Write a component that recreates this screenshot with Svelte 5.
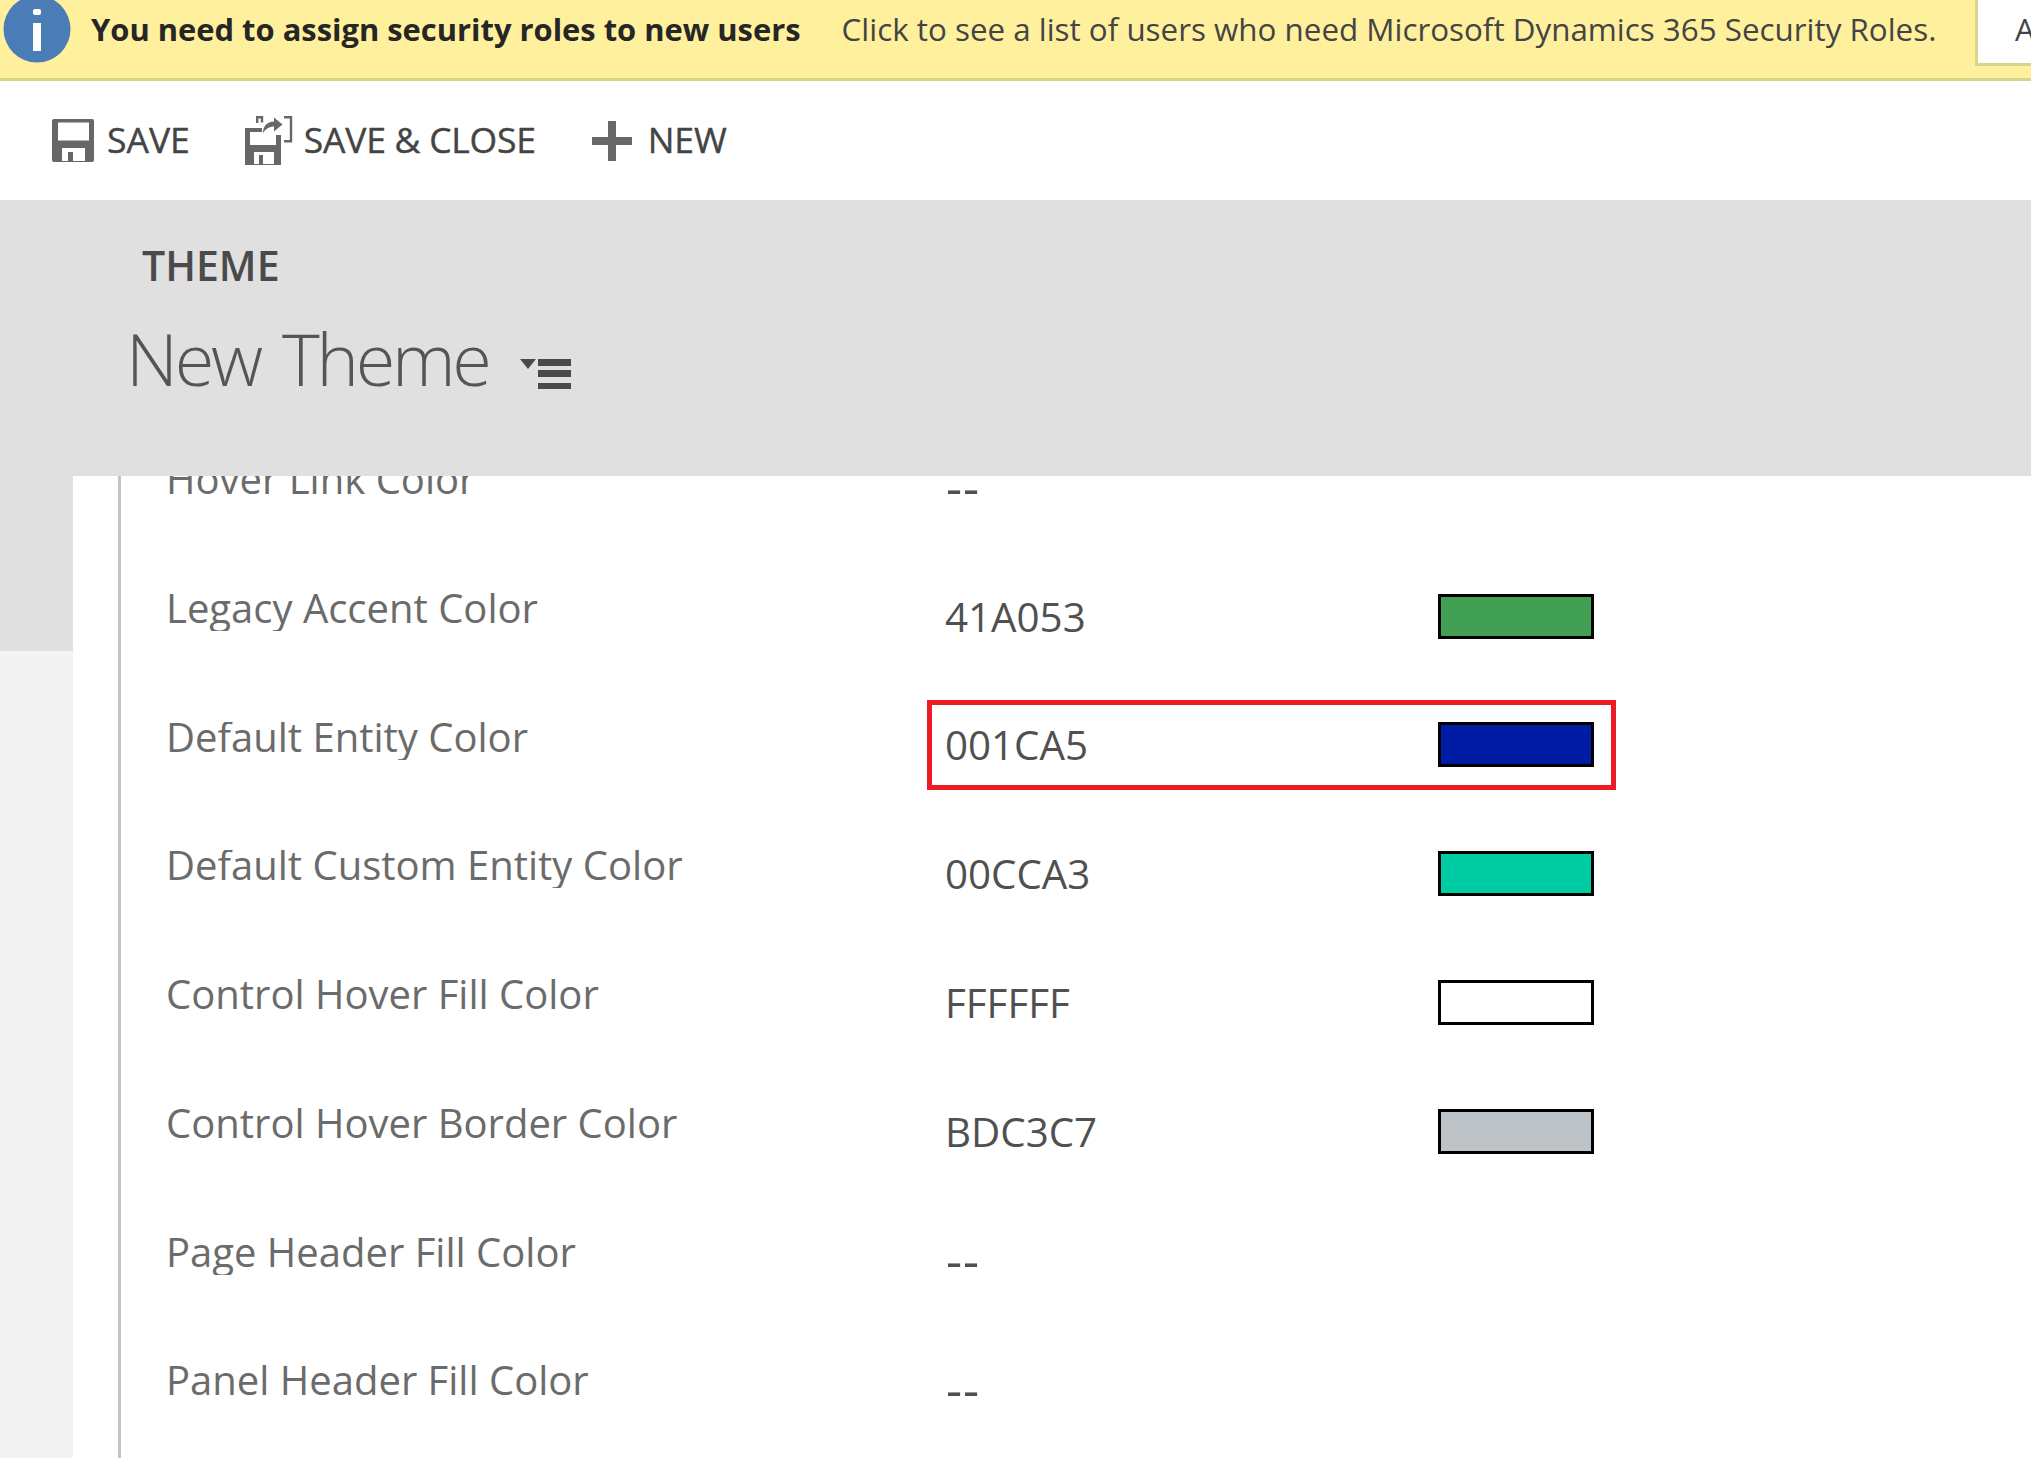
<script lang="ts">
  const rows = [
    { label: 'Hover Link Color', value: '--' },
    { label: 'Legacy Accent Color', value: '41A053', color: '#41a053' },
    { label: 'Default Entity Color', value: '001CA5', color: '#001ca5', marked: true },
    { label: 'Default Custom Entity Color', value: '00CCA3', color: '#00cca3' },
    { label: 'Control Hover Fill Color', value: 'FFFFFF', color: '#ffffff' },
    { label: 'Control Hover Border Color', value: 'BDC3C7', color: '#bdc3c7' },
    { label: 'Page Header Fill Color', value: '--' },
    { label: 'Panel Header Fill Color', value: '--' }
  ];
</script>

<div class="page">
  <div class="banner">
    <svg class="info" viewBox="0 0 74 74" width="74" height="74">
      <circle cx="37" cy="34" r="33.5" fill="#4a7db5" />
      <rect x="33" y="14" width="8" height="6" rx="2" fill="#fff" />
      <rect x="33" y="28" width="8" height="28" fill="#fff" />
    </svg>
    <span class="notice">You need to assign security roles to new users</span>
    <span class="detail">Click to see a list of users who need Microsoft Dynamics 365 Security Roles.</span>
    <div class="action">A</div>
  </div>

  <div class="toolbar">
    <div class="tool save">
      <svg viewBox="0 0 42 43" width="42" height="43">
        <path d="M2 0h38a2 2 0 0 1 2 2v39a2 2 0 0 1-2 2H2a2 2 0 0 1-2-2V2a2 2 0 0 1 2-2z" fill="#676767" />
        <rect x="6" y="3.500" width="31" height="18" fill="#fff" />
        <path d="M10 42V29h23v13H21V33h-5v9z" fill="#fff" />
      </svg>
      <span>SAVE</span>
    </div>
    <div class="tool close">
      <svg viewBox="0 0 49 49" width="49" height="49">
        <path d="M1 12h17v4H6v13h26V19h5v30H1z" fill="#676767" />
        <path d="M10 48V36h20v12H19v-9h-4v9z" fill="#fff" />
        <path d="M18 6.500V1.200h-4.800V7M40 1.200h7v24h-7" fill="none" stroke="#676767" stroke-width="2.400" />
        <path d="M19 17c0-7 4-11 11-11.500V1.500l8.500 7-8.500 7v-5c-4 0-8 2-11 6.500z" fill="#676767" />
      </svg>
      <span>SAVE &amp; CLOSE</span>
    </div>
    <div class="tool new">
      <svg viewBox="0 0 40 40" width="40" height="40">
        <path d="M16 0h8v16h16v8H24v16h-8V24H0v-8h16z" fill="#676767" />
      </svg>
      <span>NEW</span>
    </div>
  </div>

  <div class="header">
    <div class="entity">THEME</div>
    <div class="title">
      <span>New Theme</span>
      <svg viewBox="0 0 51 31" width="51" height="31">
        <path d="M0 1h16l-8 10z" fill="#4a4a4a" />
        <rect x="18" y="1" width="33" height="7" fill="#4a4a4a" />
        <rect x="18" y="12" width="33" height="7" fill="#4a4a4a" />
        <rect x="18" y="25" width="33" height="6" fill="#4a4a4a" />
      </svg>
    </div>
  </div>

  <div class="body">
    <div class="side"><div class="side-top"></div></div>
    <div class="content">
      <div class="rail">
        <div class="list">
          {#each rows as row}
            <div class="row">
              <div class="label">{row.label}</div>
              <div class="cell" class:marked={row.marked}>
                <span class="value" class:empty={!row.color}>{row.value}</span>
                {#if row.color}
                  <span class="swatch" style="background: {row.color}"></span>
                {/if}
              </div>
            </div>
          {/each}
        </div>
      </div>
    </div>
  </div>
</div>

<style>
  :global(body) { margin: 0; background: #fff; }
  .page {
    width: 2031px;
    height: 1458px;
    overflow: hidden;
    display: flex;
    flex-direction: column;
    font-family: "Open Sans", "Noto Sans", sans-serif;
  }

  .banner {
    height: 78px;
    flex: none;
    display: flex;
    align-items: flex-start;
    background: #fff09e;
    border-bottom: 3px solid #d6d68a;
    overflow: hidden;
    position: relative;
  }
  .info { flex: none; margin: -5px 0 0 0; }
  .notice {
    margin: 7px 0 0 17px;
    font-size: 30.900px;
    line-height: 44px;
    font-weight: 700;
    color: #262626;
    white-space: nowrap;
  }
  .detail {
    margin: 7px 0 0 41px;
    font-size: 31.350px;
    line-height: 44px;
    color: #444;
    white-space: nowrap;
  }
  .action {
    position: absolute;
    left: 1975px;
    top: -3px;
    width: 60px;
    height: 63px;
    background: #fff;
    border: 3px solid #d6d68a;
    padding-left: 37px;
    font-size: 31px;
    line-height: 58px;
    color: #444;
  }

  .toolbar {
    height: 119px;
    flex: none;
    display: flex;
    align-items: center;
    padding-left: 52px;
    background: #fff;
  }
  .tool {
    display: flex;
    align-items: center;
    font-size: 35.500px;
    color: #444;
    -webkit-text-stroke: 0.4px #444;
    white-space: nowrap;
  }
  .tool span { margin-top: -3px; }
  .tool svg { flex: none; }
  .save { gap: 13px; }
  .close { gap: 11px; margin-left: 54px; letter-spacing: -0.250px; }
  .new { gap: 16px; margin-left: 56px; }

  .header {
    height: 276px;
    flex: none;
    background: #e0e0e0;
    position: relative;
    z-index: 1;
  }
  .entity {
    margin: 37px 0 0 142px;
    font-size: 41px;
    line-height: 56px;
    font-weight: 600;
    color: #4a4a4a;
  }
  .title {
    margin: 20px 0 0 126px;
    display: flex;
    align-items: center;
    gap: 32px;
    font-size: 72px;
    line-height: 90px;
    font-weight: 300;
    letter-spacing: -3.300px;
    word-spacing: 7px;
    color: #555;
  }
  .title svg { margin-top: 31px; }

  .body { flex: 1; display: flex; min-height: 0; }
  .side {
    width: 73px;
    flex: none;
    background: #f3f3f3;
  }
  .side-top { height: 175px; background: #e0e0e0; }
  .content { flex: 1; display: flex; background: #fff; padding-left: 45px; min-width: 0; }
  .rail { flex: 1; border-left: 3px solid #c0c4c6; min-width: 0; overflow: hidden; }
  .list {
    margin-top: -53px;
    padding-left: 45px;
  }

  .row {
    height: 128.750px;
    display: flex;
    align-items: center;
  }
  .label {
    width: 761px;
    flex: none;
    align-self: flex-start;
    margin-top: 41px;
    height: 38px;
    overflow: hidden;
    font-size: 40px;
    line-height: 30px;
    color: #6b6b6b;
    white-space: nowrap;
  }
  .cell {
    box-sizing: border-box;
    width: 689px;
    height: 90px;
    border: 5px solid transparent;
    padding: 0 17px 0 13px;
    display: flex;
    align-items: center;
    justify-content: space-between;
  }
  .cell.marked { border-color: #ed1c24; }
  .value {
    font-size: 40.300px;
    color: #505050;
    white-space: nowrap;
  }
  .value.empty {
    font-size: 50px;
    line-height: 50px;
    letter-spacing: 1px;
    margin-left: 1px;
  }
  .swatch {
    box-sizing: border-box;
    width: 156px;
    height: 45px;
    border: 3px solid #000;
  }
</style>
